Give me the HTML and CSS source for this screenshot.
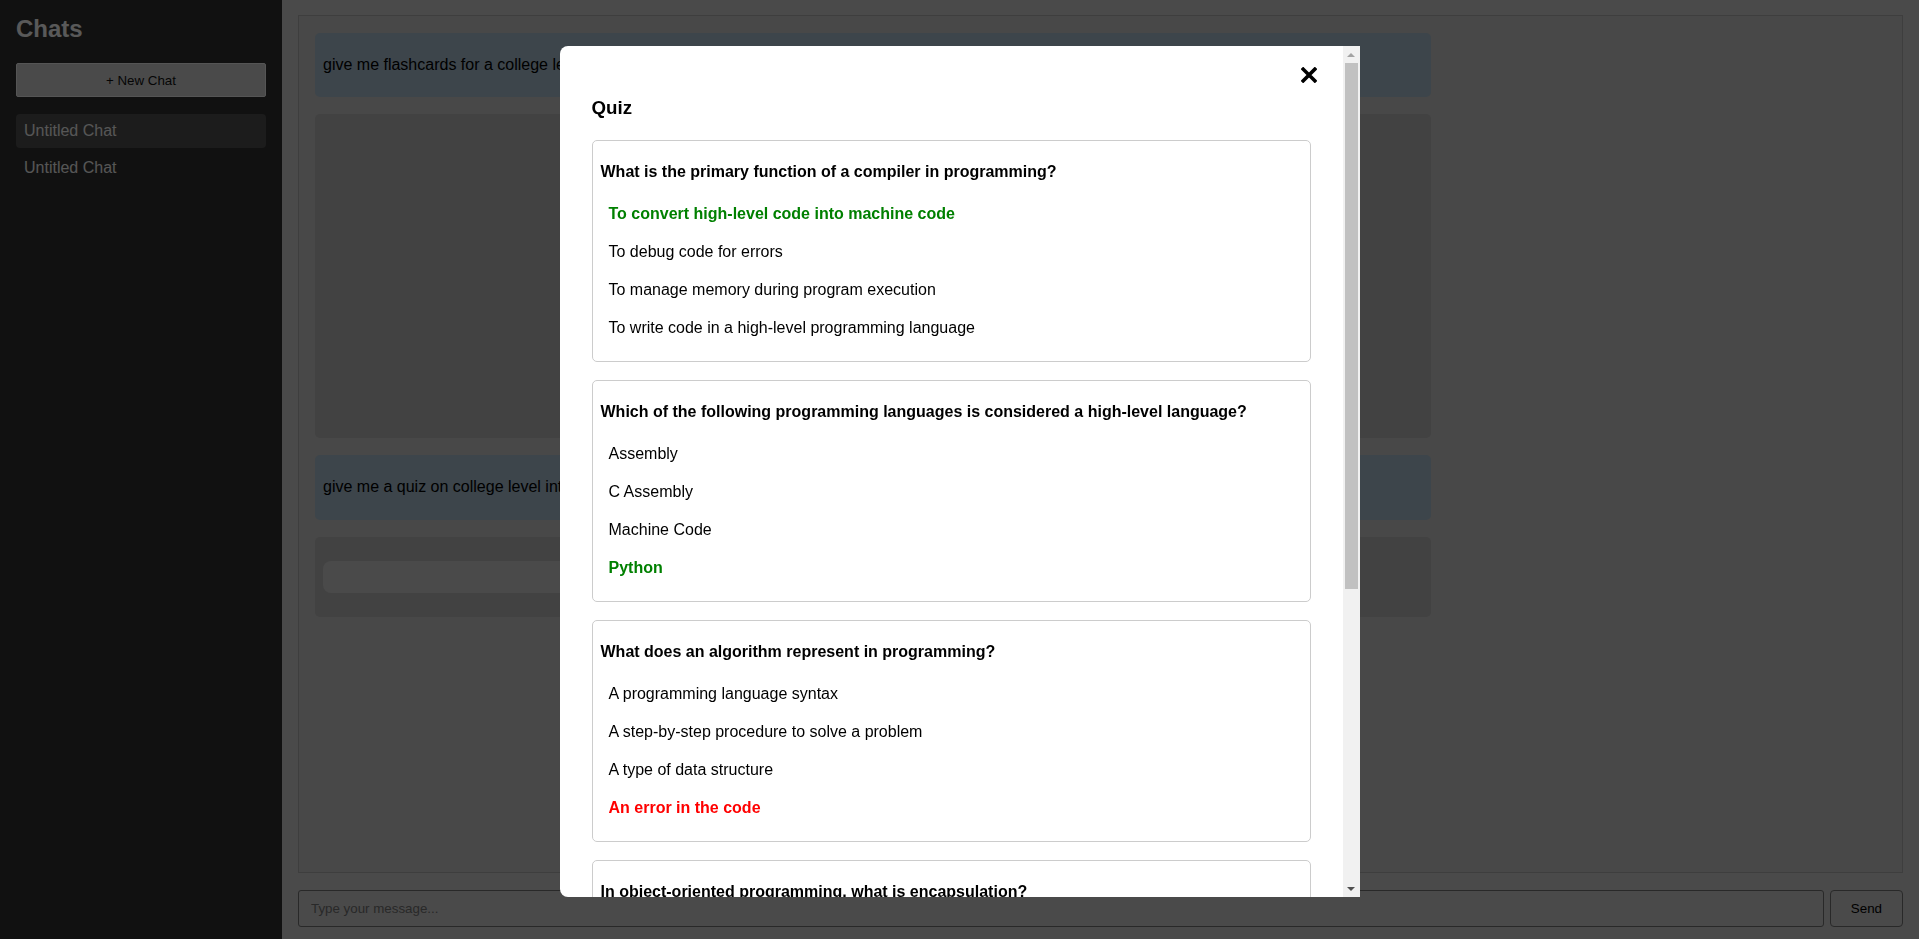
FILE: index.html
```html
<!DOCTYPE html>
<html lang="en">
<head>
<meta charset="utf-8">
<title>Chats</title>
<link rel="stylesheet" href="styles.css">
</head>
<body>
<aside class="sidebar">
  <h2 class="sidebar-title">Chats</h2>
  <button class="new-chat">+ New Chat</button>
  <ul class="chat-list">
    <li class="chat-item active">Untitled Chat</li>
    <li class="chat-item">Untitled Chat</li>
  </ul>
</aside>
<main class="main">
  <section class="chat-box">
    <div class="msg user"><p>give me flashcards for a college level intro to programming class</p></div>
    <div class="msg bot bot-cards"></div>
    <div class="msg user"><p>give me a quiz on college level intro to programming</p></div>
    <div class="msg bot bot-quiz"><div class="quiz-link"></div></div>
  </section>
  <form class="composer">
    <input class="composer-input" type="text" placeholder="Type your message...">
    <button class="send" type="button">Send</button>
  </form>
</main>
<div class="overlay">
  <div class="modal">
    <div class="modal-body">
      <button class="close" type="button" aria-label="Close">
        <svg width="16" height="16" viewBox="0 0 16 16"><path d="M2.2 2.2 L13.8 13.8 M13.8 2.2 L2.2 13.8" stroke="#000" stroke-width="3.6" stroke-linecap="square" fill="none"/></svg>
      </button>
      <h3 class="modal-title">Quiz</h3>

      <div class="q-card">
        <p class="q-text">What is the primary function of a compiler in programming?</p>
        <div class="opt correct">To convert high-level code into machine code</div>
        <div class="opt">To debug code for errors</div>
        <div class="opt">To manage memory during program execution</div>
        <div class="opt">To write code in a high-level programming language</div>
      </div>

      <div class="q-card">
        <p class="q-text">Which of the following programming languages is considered a high-level language?</p>
        <div class="opt">Assembly</div>
        <div class="opt">C Assembly</div>
        <div class="opt">Machine Code</div>
        <div class="opt correct">Python</div>
      </div>

      <div class="q-card">
        <p class="q-text">What does an algorithm represent in programming?</p>
        <div class="opt">A programming language syntax</div>
        <div class="opt">A step-by-step procedure to solve a problem</div>
        <div class="opt">A type of data structure</div>
        <div class="opt wrong">An error in the code</div>
      </div>

      <div class="q-card">
        <p class="q-text">In object-oriented programming, what is encapsulation?</p>
      </div>
    </div>
    <div class="scrollbar" aria-hidden="true">
      <div class="sb-btn"><span class="arrow-up"></span></div>
      <div class="sb-track"><div class="sb-thumb"></div></div>
      <div class="sb-btn"><span class="arrow-down"></span></div>
    </div>
  </div>
</div>
</body>
</html>
```

FILE: styles.css
```css
* { box-sizing: border-box; }

html, body {
  margin: 0;
  height: 100%;
}

body {
  display: flex;
  height: 100vh;
  overflow: hidden;
  font-family: "Liberation Sans", Arial, sans-serif;
  color: #111;
}

/* Sidebar */
.sidebar {
  width: 282px;
  flex: 0 0 282px;
  padding: 15px 16px 16px;
  background: #313131;
  color: #fff;
}

.sidebar-title {
  margin: 0 0 20px;
  font-size: 24px;
  font-weight: bold;
  color: #ffffff;
}

.new-chat {
  display: block;
  width: 100%;
  height: 34px;
  margin: 0 0 17px;
  padding: 0;
  background: #d3d3d3;
  border: 1px solid #f2f2f2;
  border-radius: 2px;
  color: #111;
  font-family: "Liberation Sans", Arial, sans-serif;
  font-size: 13.333px;
}

.chat-list {
  list-style: none;
  margin: 0;
  padding: 0;
}

.chat-item {
  padding: 8px;
  margin-bottom: 3px;
  border-radius: 4px;
  font-size: 16px;
  line-height: 18px;
  color: #f5f5f5;
}

.chat-item.active {
  background: #505050;
}

/* Main */
.main {
  flex: 1;
  display: flex;
  flex-direction: column;
  padding: 15px 16px 12px;
  background: #d3d3d3;
  min-width: 0;
}

.chat-box {
  flex: 1;
  border: 1px solid #b1b1b1;
  background: #cdcdcd;
  padding: 17px 16px 16px;
  overflow: hidden;
}

.msg {
  width: 70%;
  box-sizing: content-box;
  padding: 0 8px;
  margin-bottom: 17px;
  border-radius: 5px;
  font-size: 16px;
}

.msg p {
  margin: 0;
  padding: 23px 0;
  line-height: 18.4px;
}

.msg.user {
  background: #aec5d6;
  color: #000;
}

.msg.bot {
  background: #bcbcbc;
}

.bot-cards {
  height: 324px;
}

.bot-quiz {
  padding-top: 24px;
  padding-bottom: 24px;
}

.quiz-link {
  width: 600px;
  height: 32px;
  border-radius: 8px;
  background: #d3d3d3;
}

.composer {
  display: flex;
  gap: 6px;
  margin: 17px 0 0;
}

.composer-input {
  flex: 1;
  padding: 10px 12px;
  font-family: "Liberation Sans", Arial, sans-serif;
  font-size: 13.333px;
  border: 1px solid #767676;
  border-radius: 3px;
  background: #d3d3d3;
  color: #000;
}

.composer-input::placeholder {
  color: #757575;
}

.send {
  padding: 0 20px;
  font-family: "Liberation Sans", Arial, sans-serif;
  font-size: 13.333px;
  border: 1px solid #767676;
  border-radius: 4px;
  background: #d3d3d3;
  color: #000;
}

/* Modal */
.overlay {
  position: fixed;
  inset: 0;
  background: rgba(0, 0, 0, 0.65);
  display: flex;
  justify-content: center;
  align-items: flex-start;
  padding-top: 46px;
}

.modal {
  display: flex;
  width: 800px;
  height: 851px;
  background: #fff;
  border-radius: 8px 0 0 8px;
  overflow: hidden;
  color: #000;
}

.modal-body {
  position: relative;
  flex: 1;
  min-width: 0;
  padding: 32px;
  overflow: hidden;
}

/* drawn scrollbar of the modal */
.scrollbar {
  flex: 0 0 17px;
  display: flex;
  flex-direction: column;
  background: #f1f1f1;
}

.sb-btn {
  flex: 0 0 17px;
  display: flex;
  align-items: center;
  justify-content: center;
}

.arrow-up {
  width: 0;
  height: 0;
  border-left: 4px solid transparent;
  border-right: 4px solid transparent;
  border-bottom: 4px solid #a3a3a3;
}

.arrow-down {
  width: 0;
  height: 0;
  border-left: 4px solid transparent;
  border-right: 4px solid transparent;
  border-top: 4px solid #505050;
}

.sb-track {
  flex: 1;
  padding: 0 2px;
}

.sb-thumb {
  height: 526px;
  background: #c1c1c1;
}

.close {
  position: absolute;
  top: 21px;
  right: 26px;
  width: 16px;
  height: 16px;
  padding: 0;
  border: 0;
  background: transparent;
  display: flex;
}

.modal-title {
  margin: 19px 0 20.5px;
  font-size: 18.72px;
  font-weight: bold;
}

.q-card {
  border: 1px solid #ccc;
  border-radius: 5px;
  padding: 8px 8px 14px;
  margin-bottom: 18px;
}

.q-text {
  margin: 14px 0;
  font-size: 16px;
  font-weight: bold;
  line-height: 18px;
}

.opt {
  padding: 10px 8px;
  font-size: 16px;
  line-height: 18px;
  cursor: pointer;
}

.opt.correct {
  color: #008000;
  font-weight: bold;
}

.opt.wrong {
  color: #ff0000;
  font-weight: bold;
}
```
